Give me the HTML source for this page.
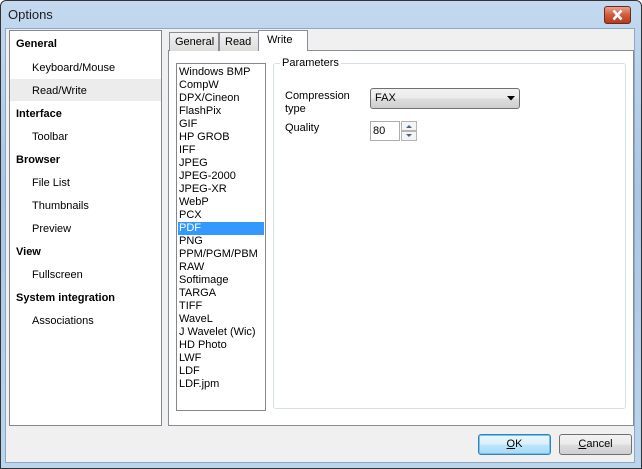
<!DOCTYPE html>
<html><head><meta charset="utf-8"><style>
*{margin:0;padding:0;box-sizing:border-box}
body{width:642px;height:469px;overflow:hidden;font-family:"Liberation Sans",sans-serif;font-size:11px;color:#000;background:#fff}
.win{position:absolute;left:0;top:0;width:642px;height:469px;background:linear-gradient(#c4d9ef,#a9c6e6 40%,#bcd5ee);border:1px solid #333;border-radius:6px 6px 0 0}
.title{position:absolute;left:7px;top:6px;font-size:13px;color:#1e1e1e}
.close{position:absolute;left:603px;top:5px;width:27px;height:18px;border:1px solid #6b2a1e;border-radius:3px;background:linear-gradient(#e8a493,#cf5b3d 50%,#b83a1c);}
.body{position:absolute;left:5px;top:28px;width:630px;height:435px;background:#f0f0f0;border:1px solid #8ea8c4}
.abs{position:absolute}
.nav{left:9px;top:30px;width:153px;height:396px;background:#fff;border:1px solid #828790}
.nav div{position:absolute;white-space:nowrap}
.b{font-weight:bold;left:6px}
.s{left:22px}
.tabs div{position:absolute;top:32px;height:19px;border:1px solid #898c95;border-bottom:none;background:linear-gradient(#f2f2f2,#dcdcdc);padding:3px 0 0 5px}
.panel{left:168px;top:50px;width:466px;height:376px;background:#fff;border:1px solid #898c95}
.list{left:176px;top:63px;width:90px;height:348px;border:1px solid #828790;background:#fff}
.list div{position:absolute;left:2px;height:13px;line-height:13px;white-space:nowrap}
.grp{left:273px;top:63px;width:353px;height:346px;border:1px solid #d5dfe5;border-radius:3px}
.btn{position:absolute;top:434px;width:73px;height:21px;border:1px solid #707070;border-radius:3px;background:linear-gradient(#f2f2f2,#ebebeb 50%,#dddddd 51%,#cfcfcf);text-align:center;line-height:19px}
</style></head><body>
<div class="win">
<div class="title">Options</div>
<div class="close"><svg width="25" height="16" style="position:absolute;left:0;top:0"><path d="M8.5 3.5L16.5 12.5M16.5 3.5L8.5 12.5" stroke="#fff" stroke-width="2.6"/></svg></div>
</div>
<div class="body"></div>
<div class="abs nav">
<div class="b" style="top:7px">General</div>
<div class="s" style="top:31px">Keyboard/Mouse</div>
<div style="left:0;top:48px;width:151px;height:22px;background:#ececec"></div>
<div class="s" style="top:54px">Read/Write</div>
<div class="b" style="top:77px">Interface</div>
<div class="s" style="top:100px">Toolbar</div>
<div class="b" style="top:123px">Browser</div>
<div class="s" style="top:146px">File List</div>
<div class="s" style="top:169px">Thumbnails</div>
<div class="s" style="top:192px">Preview</div>
<div class="b" style="top:215px">View</div>
<div class="s" style="top:238px">Fullscreen</div>
<div class="b" style="top:261px">System integration</div>
<div class="s" style="top:284px">Associations</div>
</div>
<div class="abs panel"></div>
<div class="tabs">
<div style="left:169px;width:50px">General</div>
<div style="left:219px;width:40px">Read</div>
<div style="left:258px;top:30px;height:21px;width:50px;background:#fff;padding-top:3px;padding-left:8px">Write</div>
</div>
<div class="abs list">
<div style="top:2px">Windows BMP</div><div style="top:15px">CompW</div><div style="top:28px">DPX/Cineon</div><div style="top:41px">FlashPix</div><div style="top:54px">GIF</div><div style="top:67px">HP GROB</div><div style="top:80px">IFF</div><div style="top:93px">JPEG</div><div style="top:106px">JPEG-2000</div><div style="top:119px">JPEG-XR</div><div style="top:132px">WebP</div><div style="top:145px">PCX</div>
<div style="top:158px;left:1px;width:86px;background:#3399ff;color:#fff;padding-left:1px">PDF</div>
<div style="top:171px">PNG</div><div style="top:184px">PPM/PGM/PBM</div><div style="top:197px">RAW</div><div style="top:210px">Softimage</div><div style="top:223px">TARGA</div><div style="top:236px">TIFF</div><div style="top:249px">WaveL</div><div style="top:262px">J Wavelet (Wic)</div><div style="top:275px">HD Photo</div><div style="top:288px">LWF</div><div style="top:301px">LDF</div><div style="top:314px">LDF.jpm</div>
</div>
<div class="abs grp"></div>
<div class="abs" style="left:280px;top:57px;background:#fff;padding:0 2px">Parameters</div>
<div class="abs" style="left:285px;top:90px;line-height:13px">Compression<br>type</div>
<div class="abs" style="left:370px;top:88px;width:150px;height:21px;border:1px solid #707070;border-radius:3px;background:linear-gradient(#f2f2f2,#ebebeb 50%,#dddddd 51%,#cfcfcf);padding:3px 0 0 4px">FAX
<svg width="8" height="5" style="position:absolute;left:136px;top:7px"><path d="M0 0H8L4 4.5Z" fill="#000"/></svg></div>
<div class="abs" style="left:285px;top:122px">Quality</div>
<div class="abs" style="left:370px;top:121px;width:30px;height:20px;border:1px solid #abadb3;background:#fff;padding:3px 0 0 2px">80</div>
<div class="abs" style="left:401px;top:121px;width:16px;height:10px;border:1px solid #b4b4b4;background:#f4f4f4"><svg width="14" height="8" style="position:absolute;left:0;top:0"><path d="M4 6H10L7 3Z" fill="#4d6185"/></svg></div>
<div class="abs" style="left:401px;top:131px;width:16px;height:10px;border:1px solid #b4b4b4;background:#f4f4f4"><svg width="14" height="8" style="position:absolute;left:0;top:0"><path d="M4 2H10L7 5Z" fill="#4d6185"/></svg></div>
<div class="btn" style="left:478px;border-color:#3c7fb1;background:linear-gradient(#eaf6fd,#d9f0fc 50%,#bee6fd 51%,#a7d9f5);box-shadow:inset 0 0 0 1px #6cc6f0"><u>O</u>K</div>
<div class="btn" style="left:559px"><u>C</u>ancel</div>
</body></html>
